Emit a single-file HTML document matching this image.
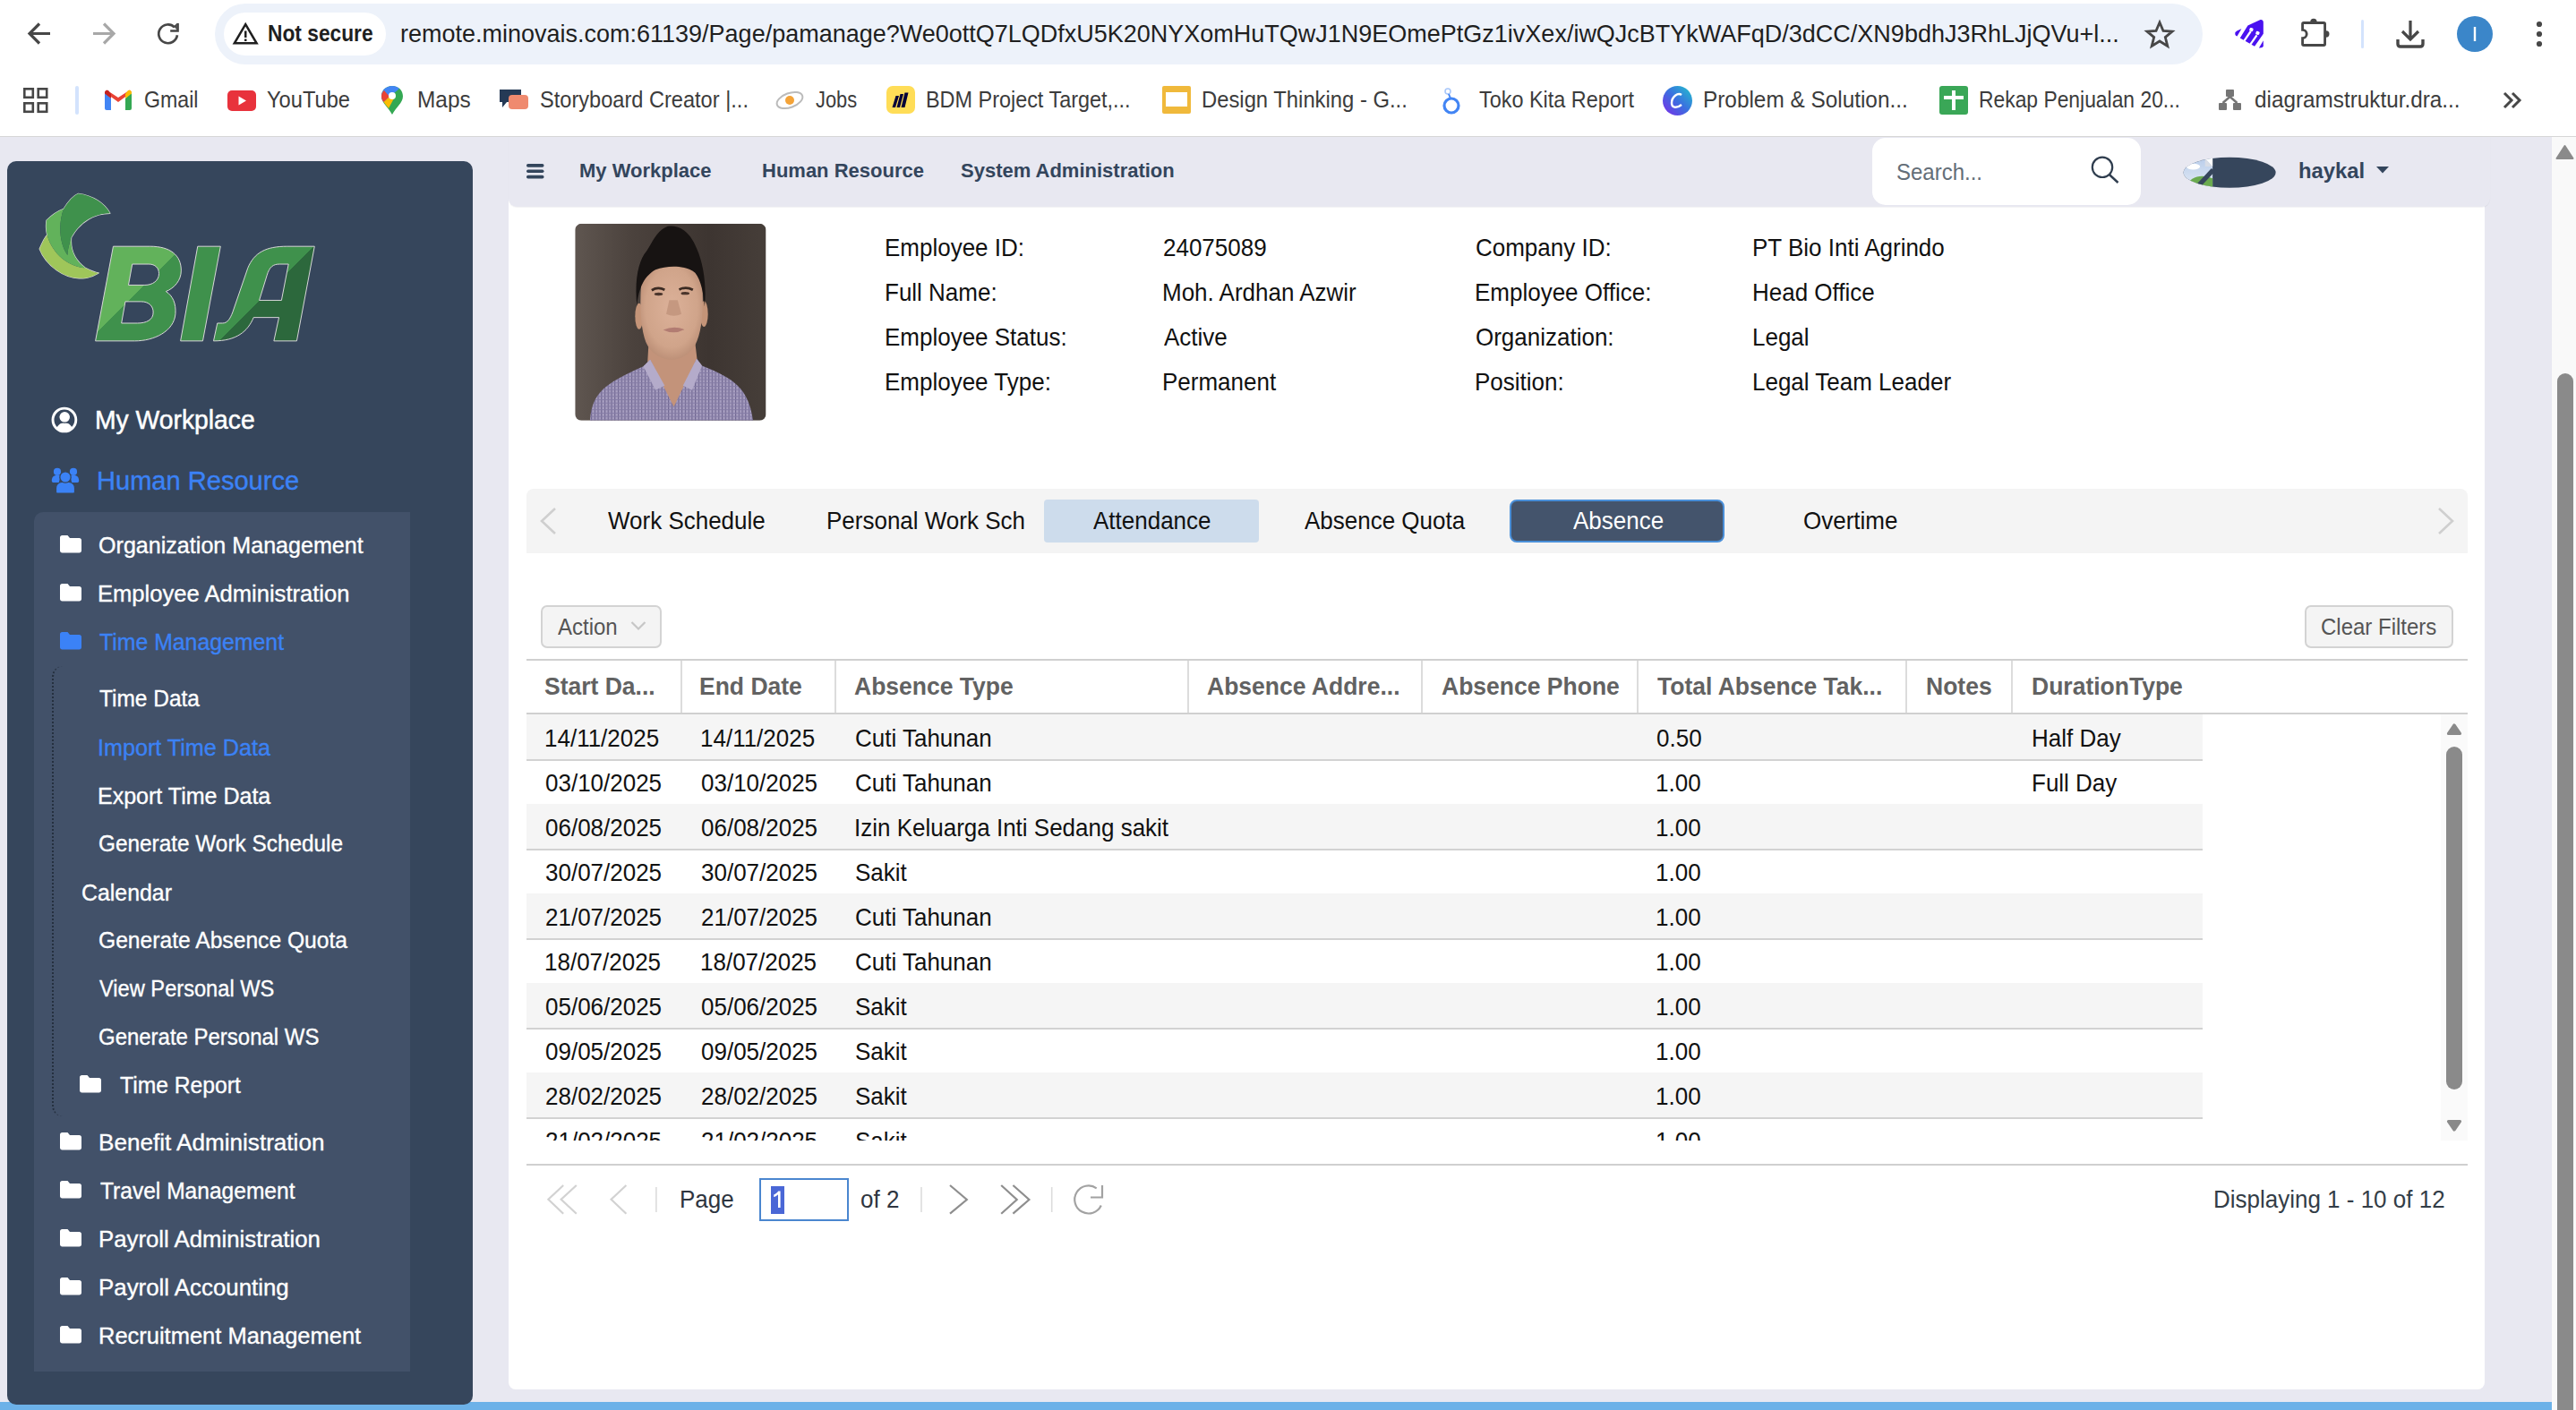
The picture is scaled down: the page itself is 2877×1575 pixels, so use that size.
<!DOCTYPE html><html><head><meta charset="utf-8"><style>
html,body{margin:0;padding:0;width:2877px;height:1575px;overflow:hidden;background:#e8e8f1;font-family:"Liberation Sans",sans-serif;}
.t{position:absolute;white-space:nowrap;line-height:1;}
.r{position:absolute;}
svg{position:absolute;overflow:visible;}
</style></head><body>
<div class="r" style="left:0px;top:0px;width:2877px;height:152px;background:#ffffff;"></div>
<div class="r" style="left:0px;top:152px;width:2877px;height:1px;background:#d6d6d6;"></div>
<div class="r" style="left:240px;top:4px;width:2220px;height:68px;background:#edf2fa;border-radius:34px;"></div>
<div class="r" style="left:250px;top:14px;width:181px;height:48px;background:#ffffff;border-radius:24px;"></div>
<svg style="left:0px;top:0px" width="240" height="80" viewBox="0 0 240 80">
<g fill="none" stroke-width="3.2" stroke-linecap="butt">
<path d="M56 37.5 H34 M44 26.5 L33 37.5 L44 48.5" stroke="#474747"/>
<path d="M104 37.5 H126 M116 26.5 L127 37.5 L116 48.5" stroke="#a8a8a8"/>
<path d="M197.95 39.25 A10.4 10.4 0 1 1 195 30.45" stroke="#474747" stroke-width="2.7"/>
<path d="M198.5 26 V34.5 H190.2" stroke="#474747" stroke-width="2.7" stroke-linejoin="miter"/>
</g>
<path d="M194.2 29.2 L197.3 26.2 L197.3 33.2 Z" fill="#474747"/>
</svg>
<svg style="left:258px;top:23px" width="32" height="30" viewBox="0 0 32 30">
<path d="M16.2 4.2 L28.6 25.3 H3.8 Z" fill="none" stroke="#1f1f1f" stroke-width="2.5" stroke-linejoin="miter"/>
<rect x="15" y="11.5" width="2.5" height="7.5" fill="#1f1f1f"/><rect x="15" y="20.5" width="2.5" height="2.5" fill="#1f1f1f"/>
</svg>
<div class="t" style="left:299.3px;top:25.4px;font-size:25.50px;font-weight:700;color:#1f1f1f;transform:scaleX(0.8923);transform-origin:0 0;">Not secure</div>
<div class="t" style="left:447.3px;top:24.1px;font-size:28.10px;font-weight:400;color:#1f1f1f;transform:scaleX(0.9609);transform-origin:0 0;">remote.minovais.com:61139/Page/pamanage?We0ottQ7LQDfxU5K20NYXomHuTQwJ1N9EOmePtGz1ivXex/iwQJcBTYkWAFqD/3dCC/XN9bdhJ3RhLJjQVu+l...</div>
<svg style="left:2395px;top:22px" width="34" height="32" viewBox="0 0 34 32">
<path d="M17 3 L21 12.5 L31 13.2 L23.3 19.6 L25.8 29.5 L17 24 L8.2 29.5 L10.7 19.6 L3 13.2 L13 12.5 Z" fill="none" stroke="#474747" stroke-width="2.8" stroke-linejoin="miter"/>
</svg>
<svg style="left:2480px;top:10px" width="140" height="56" viewBox="0 0 2576 1030">
<g fill="#4a12f0">
<path d="M820,220 C860,215 885,245 880,280 L880,510 L700,770 L400,600 L560,340 Z"/>
<path d="M300,500 C300,470 330,450 430,410 L340,560 C310,550 295,530 300,500 Z"/>
<path d="M880,650 L880,760 C870,790 840,805 790,800 Z"/>
</g>
<g stroke="#fff" stroke-width="42" fill="none"><path d="M480,665 L620,460"/><path d="M610,735 L745,540"/></g>
<g fill="#fff"><rect x="595" y="390" width="75" height="70" rx="22" transform="rotate(20 632 425)"/><rect x="725" y="460" width="75" height="70" rx="22" transform="rotate(20 762 495)"/></g>
<path d="M1710,285 H2120 Q2145,285 2145,310 V720 Q2145,745 2120,745 H1710 Q1685,745 1685,720 V600 A85,85 0 0 0 1685,430 V310 Q1685,285 1710,285 Z" stroke="#474747" stroke-width="52" fill="none"/>
<path d="M1845,265 A67,67 0 0 1 1980,265 Z" fill="#474747"/><path d="M2168,448 A67,67 0 0 1 2168,583 Z" fill="#474747"/>
</svg>
<div class="r" style="left:2636.5px;top:22px;width:3.5px;height:32px;background:#d3e3fd;border-radius:2px;"></div>
<svg style="left:2674px;top:20px" width="36" height="36" viewBox="0 0 36 36">
<path d="M18 3 V23 M9 15 L18 24 L27 15" fill="none" stroke="#474747" stroke-width="3.2"/>
<path d="M4 24 V29 Q4 32 7 32 H29 Q32 32 32 29 V24" fill="none" stroke="#474747" stroke-width="3.4"/>
</svg>
<svg style="left:2744px;top:18px" width="40" height="40" viewBox="0 0 40 40"><circle cx="20" cy="20" r="20" fill="#3b86c9"/><rect x="18.8" y="12" width="2.4" height="16" fill="#fff"/></svg>
<svg style="left:2830px;top:20px" width="14" height="36" viewBox="0 0 14 36"><circle cx="6" cy="7" r="3.1" fill="#474747"/><circle cx="6" cy="18" r="3.1" fill="#474747"/><circle cx="6" cy="29" r="3.1" fill="#474747"/></svg>
<svg style="left:26px;top:98px" width="30" height="30" viewBox="0 0 30 30" fill="none" stroke="#474747" stroke-width="2.6">
<rect x="1.3" y="1.3" width="9.5" height="9.5"/><rect x="16.7" y="1.3" width="9.5" height="9.5"/><rect x="1.3" y="17.3" width="9.5" height="9.5"/><rect x="16.7" y="17.3" width="9.5" height="9.5"/></svg>
<div class="r" style="left:84px;top:96px;width:4px;height:32px;background:#d3e3fd;border-radius:2px;"></div>
<svg style="left:117px;top:100px" width="30" height="23" viewBox="0 0 30 23">
<path d="M0 3 V21 A2 2 0 0 0 2 23 H7 V10 Z" fill="#4285f4"/>
<path d="M23 23 H28 A2 2 0 0 0 30 21 V3 L23 10 Z" fill="#34a853"/>
<path d="M0 3 L15 14 L30 3 L28 0.5 L15 9 L2 0.5 Z" fill="#ea4335"/>
<path d="M23 5 V10 L30 4.5 V3 A3 3 0 0 0 26 1 Z" fill="#fbbc04"/>
<path d="M0 3 V4.5 L7 10 V5 L4 1 A3 3 0 0 0 0 3 Z" fill="#c5221f"/>
</svg>
<div class="t" style="left:161.0px;top:99.2px;font-size:24.98px;font-weight:400;color:#3c3c3c;transform:scaleX(0.9270);transform-origin:0 0;">Gmail</div>
<svg style="left:254px;top:101px" width="32" height="23" viewBox="0 0 32 23"><rect width="32" height="23" rx="5" fill="#e8323c"/><path d="M12.5 6.5 L21 11.5 L12.5 16.5 Z" fill="#fff"/></svg>
<div class="t" style="left:298.3px;top:99.2px;font-size:24.98px;font-weight:400;color:#3c3c3c;transform:scaleX(0.9479);transform-origin:0 0;">YouTube</div>
<svg style="left:426px;top:96px" width="24" height="32" viewBox="0 0 24 32">
<path d="M12 0 C5 0 0 5 0 11.5 C0 19 8 24 12 32 C16 24 24 19 24 11.5 C24 5 19 0 12 0 Z" fill="#34a853"/>
<path d="M12 0 C5 0 0 5 0 11.5 C0 14 1 16 2.5 18 L20 3 C18 1 15 0 12 0 Z" fill="#4285f4"/>
<path d="M0 11.5 C0 14 1 16 2.5 18 L9 12 L3 5 C1 7 0 9 0 11.5 Z" fill="#ea4335"/>
<path d="M2.5 18 C4 20 6 22 8 25 L14 14 L9 12 Z" fill="#fbbc04"/>
<circle cx="12" cy="11" r="4" fill="#fff"/></svg>
<div class="t" style="left:466.2px;top:99.2px;font-size:24.98px;font-weight:400;color:#3c3c3c;transform:scaleX(0.9776);transform-origin:0 0;">Maps</div>
<svg style="left:558px;top:100px" width="32" height="26" viewBox="0 0 32 26"><path d="M0 0 H24 V14 H8 L3 20 V14 H0 Z" fill="#253a56"/><rect x="10" y="6" width="22" height="16" rx="4" fill="#ef8a6f"/></svg>
<div class="t" style="left:602.8px;top:99.2px;font-size:24.98px;font-weight:400;color:#3c3c3c;transform:scaleX(0.9447);transform-origin:0 0;">Storyboard Creator |...</div>
<svg style="left:866px;top:99px" width="32" height="26" viewBox="0 0 32 26"><ellipse cx="16" cy="13" rx="15" ry="8" transform="rotate(-20 16 13)" fill="none" stroke="#bbb" stroke-width="2"/><circle cx="16" cy="13" r="5" fill="#f4a338"/></svg>
<div class="t" style="left:911.2px;top:99.2px;font-size:24.98px;font-weight:400;color:#3c3c3c;transform:scaleX(0.8750);transform-origin:0 0;">Jobs</div>
<svg style="left:990px;top:96px" width="32" height="31" viewBox="0 0 32 31"><rect width="32" height="31" rx="7" fill="#ffdd57"/><path d="M6.5 24 L10.5 11 H14 L10 24 Z M11.5 24 L15.5 9 H19 L15 24 Z M16.5 24 L20.5 7.5 H24.5 L20.5 24 Z" fill="#050038"/></svg>
<div class="t" style="left:1034.3px;top:99.2px;font-size:24.98px;font-weight:400;color:#3c3c3c;transform:scaleX(0.9375);transform-origin:0 0;">BDM Project Target,...</div>
<svg style="left:1298px;top:96px" width="32" height="31" viewBox="0 0 32 31"><rect width="32" height="31" rx="2" fill="#f0b93b"/><rect x="4" y="7" width="24" height="16" fill="#fff"/></svg>
<div class="t" style="left:1342.0px;top:99.2px;font-size:24.98px;font-weight:400;color:#3c3c3c;transform:scaleX(0.9536);transform-origin:0 0;">Design Thinking - G...</div>
<svg style="left:1608px;top:97px" width="26" height="32" viewBox="0 0 26 32"><circle cx="13" cy="21" r="8" fill="none" stroke="#4285f4" stroke-width="3.2"/><circle cx="9" cy="5" r="3" fill="none" stroke="#a8c7fa" stroke-width="1.6"/><path d="M10 8 L12 13" stroke="#4285f4" stroke-width="2"/></svg>
<div class="t" style="left:1651.8px;top:99.2px;font-size:24.98px;font-weight:400;color:#3c3c3c;transform:scaleX(0.9373);transform-origin:0 0;">Toko Kita Report</div>
<svg style="left:1857px;top:96px" width="33" height="33" viewBox="0 0 33 33"><defs><linearGradient id="cv" x1="0" y1="1" x2="1" y2="0"><stop offset="0" stop-color="#7d2ae8"/><stop offset="0.5" stop-color="#3b6fe0"/><stop offset="1" stop-color="#20c4cb"/></linearGradient></defs><circle cx="16.5" cy="16.5" r="16.5" fill="url(#cv)"/><path d="M21 10 C17 7 10 12 10 19 C10 25 16 25 21 21" fill="none" stroke="#fff" stroke-width="2.4"/></svg>
<div class="t" style="left:1901.9px;top:99.2px;font-size:24.98px;font-weight:400;color:#3c3c3c;transform:scaleX(0.9753);transform-origin:0 0;">Problem &amp; Solution...</div>
<svg style="left:2166px;top:96px" width="32" height="32" viewBox="0 0 32 32"><rect width="32" height="32" rx="3" fill="#3aa757"/><rect x="14" y="5" width="4" height="22" fill="#fff"/><rect x="5" y="11" width="22" height="4" fill="#fff"/></svg>
<div class="t" style="left:2209.9px;top:99.2px;font-size:24.98px;font-weight:400;color:#3c3c3c;transform:scaleX(0.9153);transform-origin:0 0;">Rekap Penjualan 20...</div>
<svg style="left:2478px;top:100px" width="25" height="24" viewBox="0 0 25 24"><rect x="8" y="0" width="9" height="8" rx="1" fill="#757575"/><rect x="0" y="15" width="9" height="8" rx="1" fill="#757575"/><rect x="16" y="15" width="9" height="8" rx="1" fill="#757575"/><path d="M12.5 8 L4.5 15 M12.5 8 L20.5 15" stroke="#757575" stroke-width="2.4"/></svg>
<div class="t" style="left:2518.0px;top:99.2px;font-size:24.98px;font-weight:400;color:#3c3c3c;transform:scaleX(0.9730);transform-origin:0 0;">diagramstruktur.dra...</div>
<svg style="left:2794px;top:101px" width="24" height="22" viewBox="0 0 24 22"><path d="M3 3 L11 11 L3 19 M12 3 L20 11 L12 19" fill="none" stroke="#474747" stroke-width="3"/></svg>
<div class="r" style="left:2850px;top:153px;width:27px;height:1422px;background:#f9f9f9;"></div>
<svg style="left:2850px;top:153px" width="27" height="30" viewBox="0 0 27 30"><path d="M5.5 24 L14.5 10 L23.5 24 Z" fill="#8a8a8a" stroke="#8a8a8a" stroke-width="2" stroke-linejoin="round"/></svg>
<div class="r" style="left:2856px;top:417px;width:18px;height:1158px;background:#8a8a8a;border-radius:9px 9px 0 0;"></div>
<div class="r" style="left:0px;top:1566px;width:2850px;height:9px;background:#6cb1e8;"></div>
<div class="r" style="left:8px;top:180px;width:520px;height:1389px;background:#36465c;border-radius:10px;"></div>
<div class="r" style="left:38px;top:572px;width:420px;height:960px;background:#425169;border-radius:10px 0 0 0;"></div>
<svg style="left:30px;top:200px" width="340" height="200" viewBox="0 0 2397 1410">
<defs>
<linearGradient id="gB" gradientUnits="userSpaceOnUse" x1="0" y1="0" x2="2397" y2="2397"><stop offset="0.367" stop-color="#62b25b"/><stop offset="0.367" stop-color="#3f914c"/></linearGradient>
<linearGradient id="gA" gradientUnits="userSpaceOnUse" x1="0" y1="0" x2="2397" y2="2397"><stop offset="0.582" stop-color="#3f914c"/><stop offset="0.582" stop-color="#2c683c"/></linearGradient>
</defs>
<path fill="none" stroke="#d8d8d8" stroke-width="9" stroke-linejoin="round" d="M100,550 C130,480 150,450 160,440 C150,400 150,360 155,325 C200,280 250,250 290,235 C330,170 370,130 405,115 C520,130 610,190 655,270 C540,270 420,330 350,460 C340,560 380,640 460,700 C500,720 530,735 565,740 C500,780 440,785 430,780 C300,790 150,680 100,550 Z"/>
<g stroke="none">
<path d="M100,550 C130,480 150,450 160,440 C200,590 330,690 460,700 C500,720 530,735 565,740 C500,780 440,785 430,780 C300,790 150,680 100,550 Z" fill="#9fc65a"/>
<path d="M155,325 C200,280 250,250 290,235 C250,340 250,500 320,600 C320,570 330,520 350,460 C340,560 380,640 460,700 C330,690 200,590 160,440 C150,400 150,360 155,325 Z" fill="#62b25b"/>
<path d="M290,235 C330,170 370,130 405,115 C520,130 610,190 655,270 C540,270 420,330 350,460 C330,520 320,570 320,600 C250,500 250,340 290,235 Z" fill="#3f914c"/>
<path stroke="#d8d8d8" stroke-width="7" fill-rule="evenodd" fill="url(#gB)" d="M680,530 L970,530 C1130,530 1215,600 1215,720 C1215,800 1160,860 1095,885 C1150,920 1175,980 1170,1060 C1160,1200 1000,1275 850,1275 L540,1275 Z M830,670 L960,670 C1010,670 1040,700 1040,745 C1040,800 990,835 930,835 L800,835 Z M775,965 L900,965 C960,965 995,1000 995,1050 C995,1110 940,1135 870,1135 L745,1135 Z"/>
<path stroke="#d8d8d8" stroke-width="7" d="M1345,530 L1525,530 L1385,1275 L1210,1275 Z" fill="#3f914c"/>
<path stroke="#d8d8d8" stroke-width="7" fill-rule="evenodd" fill="url(#gA)" d="M1470,1275 L1500,1135 L1540,1135 C1580,1135 1600,1100 1620,1050 L1740,700 C1790,580 1880,530 2050,530 L2265,530 L2125,1275 L1945,1275 L1985,1090 L1785,1090 C1740,1200 1650,1275 1470,1275 Z M1830,955 L2005,955 L2060,670 L1990,670 C1940,670 1910,690 1890,760 Z"/>
</g></svg>
<svg style="left:57px;top:455px" width="30" height="30" viewBox="0 0 30 30">
<circle cx="14.9" cy="14" r="12.9" fill="none" stroke="#fff" stroke-width="2.9"/>
<path d="M6.2 23.6 C7.8 19.3 11 17.3 15 17.3 C19 17.3 22.2 19.3 23.8 23.6 C21.3 26 18.3 27.3 15 27.3 C11.7 27.3 8.7 26 6.2 23.6 Z" fill="#fff"/>
<circle cx="15.2" cy="10.8" r="6.4" fill="#fff" stroke="#36465c" stroke-width="1.2"/>
</svg>
<div class="t" style="left:106.3px;top:453.7px;font-size:29.66px;font-weight:400;color:#ffffff;-webkit-text-stroke:0.5px #fff;transform:scaleX(0.9538);transform-origin:0 0;">My Workplace</div>
<svg style="left:57px;top:522px" width="32" height="30" viewBox="0 0 32 30" fill="#3b82f6">
<circle cx="7" cy="4.9" r="4.1"/><circle cx="25" cy="4.9" r="4.1"/>
<path d="M0.8 15 C0.8 11 3 9 6 9 H9 C10.5 9 11.5 10 12 11 C10 12.5 9 14.5 9 17 H2.5 C1.5 17 0.8 16 0.8 15 Z"/>
<path d="M31.2 15 C31.2 11 29 9 26 9 H23 C21.5 9 20.5 10 20 11 C22 12.5 23 14.5 23 17 H29.5 C30.5 17 31.2 16 31.2 15 Z"/>
<path d="M5.5 27.5 V23 C5.5 19 8.5 16.5 12 16.5 H20 C23.5 16.5 26.5 19 26.5 23 V27.5 C26.5 28.5 26 29 25 29 H7 C6 29 5.5 28.5 5.5 27.5 Z" stroke="#36465c" stroke-width="1.2"/>
<circle cx="16" cy="11" r="6.2" stroke="#36465c" stroke-width="1.3"/>
</svg>
<div class="t" style="left:107.7px;top:522.2px;font-size:29.66px;font-weight:400;color:#3b82f6;-webkit-text-stroke:0.4px #3b82f6;transform:scaleX(0.9798);transform-origin:0 0;">Human Resource</div>
<svg style="left:67px;top:598.3px" width="24" height="19.4" viewBox="0 0 24 20" preserveAspectRatio="none"><path d="M0 2.5 C0 1 1 0 2.5 0 H8.5 L11 3 H21.5 C23 3 24 4 24 5.5 V17.5 C24 19 23 20 21.5 20 H2.5 C1 20 0 19 0 17.5 Z" fill="#fff"/></svg>
<div class="t" style="left:110.2px;top:597.2px;font-size:24.98px;font-weight:400;color:#fff;-webkit-text-stroke:0.35px #fff;transform:scaleX(1.0051);transform-origin:0 0;">Organization Management</div>
<svg style="left:67px;top:652.3px" width="24" height="19.4" viewBox="0 0 24 20" preserveAspectRatio="none"><path d="M0 2.5 C0 1 1 0 2.5 0 H8.5 L11 3 H21.5 C23 3 24 4 24 5.5 V17.5 C24 19 23 20 21.5 20 H2.5 C1 20 0 19 0 17.5 Z" fill="#fff"/></svg>
<div class="t" style="left:109.2px;top:651.2px;font-size:24.98px;font-weight:400;color:#fff;-webkit-text-stroke:0.35px #fff;transform:scaleX(1.0243);transform-origin:0 0;">Employee Administration</div>
<svg style="left:67px;top:705.7px" width="24" height="19.4" viewBox="0 0 24 20" preserveAspectRatio="none"><path d="M0 2.5 C0 1 1 0 2.5 0 H8.5 L11 3 H21.5 C23 3 24 4 24 5.5 V17.5 C24 19 23 20 21.5 20 H2.5 C1 20 0 19 0 17.5 Z" fill="#3b82f6"/></svg>
<div class="t" style="left:111.2px;top:704.6px;font-size:24.98px;font-weight:400;color:#3b82f6;-webkit-text-stroke:0.35px #3b82f6;transform:scaleX(0.9942);transform-origin:0 0;">Time Management</div>
<div class="t" style="left:111.2px;top:768.2px;font-size:24.98px;font-weight:400;color:#fff;-webkit-text-stroke:0.35px #fff;transform:scaleX(0.9798);transform-origin:0 0;">Time Data</div>
<div class="t" style="left:109.2px;top:822.7px;font-size:24.98px;font-weight:400;color:#3b82f6;-webkit-text-stroke:0.35px #3b82f6;transform:scaleX(1.0074);transform-origin:0 0;">Import Time Data</div>
<div class="t" style="left:109.2px;top:876.9px;font-size:24.98px;font-weight:400;color:#fff;-webkit-text-stroke:0.35px #fff;transform:scaleX(1.0021);transform-origin:0 0;">Export Time Data</div>
<div class="t" style="left:110.2px;top:930.2px;font-size:24.98px;font-weight:400;color:#fff;-webkit-text-stroke:0.35px #fff;transform:scaleX(0.9755);transform-origin:0 0;">Generate Work Schedule</div>
<div class="t" style="left:90.5px;top:984.8px;font-size:24.98px;font-weight:400;color:#fff;-webkit-text-stroke:0.35px #fff;transform:scaleX(0.9960);transform-origin:0 0;">Calendar</div>
<div class="t" style="left:110.2px;top:1038.0px;font-size:24.98px;font-weight:400;color:#fff;-webkit-text-stroke:0.35px #fff;transform:scaleX(0.9868);transform-origin:0 0;">Generate Absence Quota</div>
<div class="t" style="left:111.2px;top:1092.2px;font-size:24.98px;font-weight:400;color:#fff;-webkit-text-stroke:0.35px #fff;transform:scaleX(0.9466);transform-origin:0 0;">View Personal WS</div>
<div class="t" style="left:110.2px;top:1146.2px;font-size:24.98px;font-weight:400;color:#fff;-webkit-text-stroke:0.35px #fff;transform:scaleX(0.9596);transform-origin:0 0;">Generate Personal WS</div>
<svg style="left:89px;top:1201.3px" width="24" height="19.4" viewBox="0 0 24 20" preserveAspectRatio="none"><path d="M0 2.5 C0 1 1 0 2.5 0 H8.5 L11 3 H21.5 C23 3 24 4 24 5.5 V17.5 C24 19 23 20 21.5 20 H2.5 C1 20 0 19 0 17.5 Z" fill="#fff"/></svg>
<div class="t" style="left:133.7px;top:1200.2px;font-size:24.98px;font-weight:400;color:#fff;-webkit-text-stroke:0.35px #fff;transform:scaleX(0.9883);transform-origin:0 0;">Time Report</div>
<svg style="left:67px;top:1265.3px" width="24" height="19.4" viewBox="0 0 24 20" preserveAspectRatio="none"><path d="M0 2.5 C0 1 1 0 2.5 0 H8.5 L11 3 H21.5 C23 3 24 4 24 5.5 V17.5 C24 19 23 20 21.5 20 H2.5 C1 20 0 19 0 17.5 Z" fill="#fff"/></svg>
<div class="t" style="left:110.1px;top:1264.2px;font-size:24.98px;font-weight:400;color:#fff;-webkit-text-stroke:0.35px #fff;transform:scaleX(1.0454);transform-origin:0 0;">Benefit Administration</div>
<svg style="left:67px;top:1319.3px" width="24" height="19.4" viewBox="0 0 24 20" preserveAspectRatio="none"><path d="M0 2.5 C0 1 1 0 2.5 0 H8.5 L11 3 H21.5 C23 3 24 4 24 5.5 V17.5 C24 19 23 20 21.5 20 H2.5 C1 20 0 19 0 17.5 Z" fill="#fff"/></svg>
<div class="t" style="left:112.2px;top:1318.2px;font-size:24.98px;font-weight:400;color:#fff;-webkit-text-stroke:0.35px #fff;transform:scaleX(0.9837);transform-origin:0 0;">Travel Management</div>
<svg style="left:67px;top:1372.8px" width="24" height="19.4" viewBox="0 0 24 20" preserveAspectRatio="none"><path d="M0 2.5 C0 1 1 0 2.5 0 H8.5 L11 3 H21.5 C23 3 24 4 24 5.5 V17.5 C24 19 23 20 21.5 20 H2.5 C1 20 0 19 0 17.5 Z" fill="#fff"/></svg>
<div class="t" style="left:110.1px;top:1371.7px;font-size:24.98px;font-weight:400;color:#fff;-webkit-text-stroke:0.35px #fff;transform:scaleX(1.0325);transform-origin:0 0;">Payroll Administration</div>
<svg style="left:67px;top:1426.8px" width="24" height="19.4" viewBox="0 0 24 20" preserveAspectRatio="none"><path d="M0 2.5 C0 1 1 0 2.5 0 H8.5 L11 3 H21.5 C23 3 24 4 24 5.5 V17.5 C24 19 23 20 21.5 20 H2.5 C1 20 0 19 0 17.5 Z" fill="#fff"/></svg>
<div class="t" style="left:110.1px;top:1425.7px;font-size:24.98px;font-weight:400;color:#fff;-webkit-text-stroke:0.35px #fff;transform:scaleX(1.0356);transform-origin:0 0;">Payroll Accounting</div>
<svg style="left:67px;top:1480.8px" width="24" height="19.4" viewBox="0 0 24 20" preserveAspectRatio="none"><path d="M0 2.5 C0 1 1 0 2.5 0 H8.5 L11 3 H21.5 C23 3 24 4 24 5.5 V17.5 C24 19 23 20 21.5 20 H2.5 C1 20 0 19 0 17.5 Z" fill="#fff"/></svg>
<div class="t" style="left:110.2px;top:1479.7px;font-size:24.98px;font-weight:400;color:#fff;-webkit-text-stroke:0.35px #fff;transform:scaleX(1.0204);transform-origin:0 0;">Recruitment Management</div>
<div class="r" style="left:58px;top:744px;width:14px;height:503px;border-left:2px dotted #25303f;border-top:0;border-radius:12px 0 0 12px;"></div>
<div class="r" style="left:568px;top:215px;width:2207px;height:1337px;background:#ffffff;border-radius:0 0 8px 8px;"></div>
<div class="r" style="left:568px;top:153px;width:2213px;height:77.5px;background:#e8e8f1;border-radius:0 0 9px 9px;box-shadow:0 1px 1px rgba(0,0,40,0.05);"></div>
<svg style="left:587.7px;top:182px" width="20" height="18" viewBox="0 0 20 18" fill="#33455c"><rect y="1" width="19.5" height="3.7" rx="1.8"/><rect y="7.4" width="19.5" height="3.7" rx="1.8"/><rect y="13.7" width="19.5" height="3.9" rx="1.8"/></svg>
<div class="t" style="left:647.2px;top:178.5px;font-size:22.90px;font-weight:700;color:#33455c;transform:scaleX(0.9609);transform-origin:0 0;">My Workplace</div>
<div class="t" style="left:851.2px;top:178.5px;font-size:22.90px;font-weight:700;color:#33455c;transform:scaleX(0.9609);transform-origin:0 0;">Human Resource</div>
<div class="t" style="left:1072.8px;top:178.5px;font-size:22.90px;font-weight:700;color:#33455c;transform:scaleX(0.9609);transform-origin:0 0;">System Administration</div>
<div class="r" style="left:2091px;top:154px;width:300px;height:75px;background:#ffffff;border-radius:15px;"></div>
<div class="t" style="left:2118.2px;top:179.5px;font-size:24.98px;font-weight:400;color:#646e78;transform:scaleX(0.9609);transform-origin:0 0;">Search...</div>
<svg style="left:2334px;top:174px" width="34" height="32" viewBox="0 0 34 32"><circle cx="14" cy="12.8" r="11.2" fill="none" stroke="#2f3d4e" stroke-width="2.2"/><path d="M21.8 21 L31.5 30" stroke="#2f3d4e" stroke-width="2.4"/></svg>
<svg style="left:2080px;top:150px" width="620" height="85" viewBox="0 0 2576 353">
<defs><clipPath id="avc"><ellipse cx="1704" cy="177.5" rx="214" ry="70.5"/></clipPath>
<linearGradient id="avg" x1="0" y1="0" x2="0" y2="1"><stop offset="0" stop-color="#b9cdea"/><stop offset="1" stop-color="#e6edf7"/></linearGradient></defs>
<g clip-path="url(#avc)">
<rect x="1480" y="100" width="460" height="160" fill="#36465c"/>
<rect x="1485" y="110" width="140" height="150" fill="url(#avg)"/>
<ellipse cx="1535" cy="150" rx="32" ry="14" fill="#fff"/>
<path d="M1500,240 C1520,200 1570,180 1625,205 L1625,260 L1500,260 Z" fill="#6aaa4f"/>
<path d="M1590,112 L1625,112 L1625,150 Z" fill="#fff"/><path d="M1590,112 L1590,150 L1625,150 Z" fill="#d8dde6"/>
<path d="M1628,165 L1562,236" stroke="#36465c" stroke-width="22"/>
</g></svg>
<div class="t" style="left:2567.1px;top:179.0px;font-size:23.94px;font-weight:700;color:#33455c;transform:scaleX(0.9958);transform-origin:0 0;">haykal</div>
<svg style="left:2654px;top:186px" width="14" height="8" viewBox="0 0 14 8"><path d="M0 0 H14 L7 7.5 Z" fill="#33455c"/></svg>
<svg style="left:630px;top:240px" width="240" height="240" viewBox="0 0 1410 1410">
<defs><clipPath id="pc"><rect x="72" y="58" width="1253" height="1292" rx="42"/></clipPath>
<linearGradient id="bgp" x1="0" y1="0" x2="1" y2="0"><stop offset="0" stop-color="#5f5650"/><stop offset="0.3" stop-color="#4b423d"/><stop offset="0.7" stop-color="#3d3531"/><stop offset="1" stop-color="#463e39"/></linearGradient>
<radialGradient id="skin" cx="0.5" cy="0.45" r="0.6"><stop offset="0" stop-color="#dcb199"/><stop offset="0.7" stop-color="#d0a48a"/><stop offset="1" stop-color="#b78a72"/></radialGradient>
<pattern id="chk" width="22" height="22" patternUnits="userSpaceOnUse"><rect width="22" height="22" fill="#a79ec0"/><rect x="0" width="7" height="22" fill="#6f6690"/><rect y="0" width="22" height="6" fill="#857ca6"/></pattern></defs>
<g clip-path="url(#pc)">
<rect x="72" y="58" width="1253" height="1292" fill="url(#bgp)"/>
<path d="M555,840 C600,930 810,930 860,840 L880,1010 L720,1260 L545,1010 Z" fill="#c3937a"/>
<ellipse cx="492" cy="665" rx="26" ry="85" fill="#c49478"/><ellipse cx="918" cy="650" rx="26" ry="85" fill="#c49478"/>
<path d="M505,470 C505,380 560,335 705,330 C860,335 905,390 908,480 C915,630 905,770 860,855 C815,925 760,950 705,950 C645,950 585,920 548,858 C505,780 495,620 505,470 Z" fill="url(#skin)"/>
<path d="M478,600 C460,420 490,300 540,240 C580,180 610,100 680,75 C760,60 830,120 870,220 C915,320 935,460 922,600 C915,520 900,430 860,380 C800,330 680,330 600,360 C530,400 490,470 478,600 Z" fill="#171312"/>
<path d="M575,495 Q615,470 660,492" stroke="#3a2a22" stroke-width="16" fill="none"/><path d="M755,490 Q800,468 845,492" stroke="#3a2a22" stroke-width="16" fill="none"/>
<ellipse cx="620" cy="520" rx="28" ry="10" fill="#4a352c"/><ellipse cx="795" cy="515" rx="28" ry="10" fill="#4a352c"/>
<path d="M690,560 L670,650 Q720,675 770,650 L745,560 Z" fill="#c59880"/>
<path d="M650,755 Q720,725 790,752 Q720,790 650,755 Z" fill="#b27c72"/>
<path d="M170,1350 C185,1170 260,1110 520,995 L565,950 L720,1260 L870,945 L905,990 C1120,1075 1210,1140 1240,1350 Z" fill="url(#chk)"/>
<path d="M520,995 L565,950 L660,1120 L600,1150 Z" fill="#b4abca"/><path d="M905,990 L870,945 L780,1120 L840,1150 Z" fill="#b4abca"/>
</g></svg>
<div class="t" style="left:987.7px;top:264.2px;font-size:27.06px;font-weight:400;color:#111111;transform:scaleX(0.9609);transform-origin:0 0;">Employee ID:</div>
<div class="t" style="left:1298.8px;top:264.2px;font-size:27.06px;font-weight:400;color:#111111;transform:scaleX(0.9609);transform-origin:0 0;">24075089</div>
<div class="t" style="left:1648.2px;top:264.2px;font-size:27.06px;font-weight:400;color:#111111;transform:scaleX(0.9609);transform-origin:0 0;">Company ID:</div>
<div class="t" style="left:1957.3px;top:264.2px;font-size:27.06px;font-weight:400;color:#111111;transform:scaleX(0.9609);transform-origin:0 0;">PT Bio Inti Agrindo</div>
<div class="t" style="left:987.7px;top:314.2px;font-size:27.06px;font-weight:400;color:#111111;transform:scaleX(0.9609);transform-origin:0 0;">Full Name:</div>
<div class="t" style="left:1297.9px;top:314.2px;font-size:27.06px;font-weight:400;color:#111111;transform:scaleX(0.9609);transform-origin:0 0;">Moh. Ardhan Azwir</div>
<div class="t" style="left:1647.3px;top:314.2px;font-size:27.06px;font-weight:400;color:#111111;transform:scaleX(0.9609);transform-origin:0 0;">Employee Office:</div>
<div class="t" style="left:1957.3px;top:314.2px;font-size:27.06px;font-weight:400;color:#111111;transform:scaleX(0.9609);transform-origin:0 0;">Head Office</div>
<div class="t" style="left:987.7px;top:364.2px;font-size:27.06px;font-weight:400;color:#111111;transform:scaleX(0.9609);transform-origin:0 0;">Employee Status:</div>
<div class="t" style="left:1299.8px;top:364.2px;font-size:27.06px;font-weight:400;color:#111111;transform:scaleX(0.9609);transform-origin:0 0;">Active</div>
<div class="t" style="left:1648.2px;top:364.2px;font-size:27.06px;font-weight:400;color:#111111;transform:scaleX(0.9609);transform-origin:0 0;">Organization:</div>
<div class="t" style="left:1957.3px;top:364.2px;font-size:27.06px;font-weight:400;color:#111111;transform:scaleX(0.9609);transform-origin:0 0;">Legal</div>
<div class="t" style="left:987.7px;top:414.2px;font-size:27.06px;font-weight:400;color:#111111;transform:scaleX(0.9609);transform-origin:0 0;">Employee Type:</div>
<div class="t" style="left:1297.9px;top:414.2px;font-size:27.06px;font-weight:400;color:#111111;transform:scaleX(0.9609);transform-origin:0 0;">Permanent</div>
<div class="t" style="left:1647.3px;top:414.2px;font-size:27.06px;font-weight:400;color:#111111;transform:scaleX(0.9609);transform-origin:0 0;">Position:</div>
<div class="t" style="left:1957.3px;top:414.2px;font-size:27.06px;font-weight:400;color:#111111;transform:scaleX(0.9609);transform-origin:0 0;">Legal Team Leader</div>
<div class="r" style="left:588px;top:546px;width:2168px;height:72px;background:#f4f4f4;border-radius:8px 8px 0 0;"></div>
<svg style="left:600px;top:566px" width="24" height="32" viewBox="0 0 24 32"><path d="M20 2 L5 16 L20 30" fill="none" stroke="#cfcfcf" stroke-width="2.6"/></svg>
<svg style="left:2720px;top:566px" width="24" height="32" viewBox="0 0 24 32"><path d="M4 2 L19 16 L4 30" fill="none" stroke="#cfcfcf" stroke-width="2.6"/></svg>
<div class="r" style="left:1166px;top:558px;width:240px;height:48px;background:#cddcec;border-radius:4px;"></div>
<div class="r" style="left:1686px;top:558px;width:240px;height:48px;background:#44546c;border-radius:8px;border:2px solid #4a8fd8;box-sizing:border-box;"></div>
<div class="t" style="left:679.2px;top:569.2px;font-size:27.06px;font-weight:400;color:#111;transform:scaleX(0.9609);transform-origin:0 0;">Work Schedule</div>
<div class="t" style="left:923.3px;top:569.2px;font-size:27.06px;font-weight:400;color:#111;transform:scaleX(0.9609);transform-origin:0 0;">Personal Work Sch</div>
<div class="t" style="left:1221.2px;top:569.2px;font-size:27.06px;font-weight:400;color:#111;transform:scaleX(0.9609);transform-origin:0 0;">Attendance</div>
<div class="t" style="left:1457.2px;top:569.2px;font-size:27.06px;font-weight:400;color:#111;transform:scaleX(0.9609);transform-origin:0 0;">Absence Quota</div>
<div class="t" style="left:1757.2px;top:569.2px;font-size:27.06px;font-weight:400;color:#ffffff;transform:scaleX(0.9609);transform-origin:0 0;">Absence</div>
<div class="t" style="left:2014.2px;top:569.2px;font-size:27.06px;font-weight:400;color:#111;transform:scaleX(0.9609);transform-origin:0 0;">Overtime</div>
<div class="r" style="left:604px;top:676px;width:135px;height:48px;background:#f4f4f4;border:2px solid #d3d3d3;border-radius:7px;box-sizing:border-box;"></div>
<div class="t" style="left:623.2px;top:688.0px;font-size:24.98px;font-weight:400;color:#555;transform:scaleX(0.9609);transform-origin:0 0;">Action</div>
<svg style="left:703px;top:693px" width="20" height="13" viewBox="0 0 20 13"><path d="M2.5 2 L10 9.5 L17.5 2" fill="none" stroke="#c6c6c6" stroke-width="2.2"/></svg>
<div class="r" style="left:2574px;top:676px;width:166px;height:48px;background:#f4f4f4;border:2px solid #d3d3d3;border-radius:7px;box-sizing:border-box;"></div>
<div class="t" style="left:2591.8px;top:688.0px;font-size:24.98px;font-weight:400;color:#555;transform:scaleX(0.9609);transform-origin:0 0;">Clear Filters</div>
<div class="r" style="left:588px;top:736px;width:2168px;height:2px;background:#d0d0d0;"></div>
<div class="r" style="left:588px;top:796px;width:2168px;height:2px;background:#d0d0d0;"></div>
<div class="r" style="left:760px;top:738px;width:2px;height:58px;background:#dcdcdc;"></div>
<div class="r" style="left:932px;top:738px;width:2px;height:58px;background:#dcdcdc;"></div>
<div class="r" style="left:1326px;top:738px;width:2px;height:58px;background:#dcdcdc;"></div>
<div class="r" style="left:1587px;top:738px;width:2px;height:58px;background:#dcdcdc;"></div>
<div class="r" style="left:1828px;top:738px;width:2px;height:58px;background:#dcdcdc;"></div>
<div class="r" style="left:2128px;top:738px;width:2px;height:58px;background:#dcdcdc;"></div>
<div class="r" style="left:2246px;top:738px;width:2px;height:58px;background:#dcdcdc;"></div>
<div class="t" style="left:608.2px;top:753.1px;font-size:27.58px;font-weight:700;color:#626262;transform:scaleX(0.9609);transform-origin:0 0;">Start Da...</div>
<div class="t" style="left:781.3px;top:753.1px;font-size:27.58px;font-weight:700;color:#626262;transform:scaleX(0.9609);transform-origin:0 0;">End Date</div>
<div class="t" style="left:954.2px;top:753.1px;font-size:27.58px;font-weight:700;color:#626262;transform:scaleX(0.9609);transform-origin:0 0;">Absence Type</div>
<div class="t" style="left:1348.2px;top:753.1px;font-size:27.58px;font-weight:700;color:#626262;transform:scaleX(0.9609);transform-origin:0 0;">Absence Addre...</div>
<div class="t" style="left:1610.2px;top:753.1px;font-size:27.58px;font-weight:700;color:#626262;transform:scaleX(0.9609);transform-origin:0 0;">Absence Phone</div>
<div class="t" style="left:1851.2px;top:753.1px;font-size:27.58px;font-weight:700;color:#626262;transform:scaleX(0.9609);transform-origin:0 0;">Total Absence Tak...</div>
<div class="t" style="left:2151.3px;top:753.1px;font-size:27.58px;font-weight:700;color:#626262;transform:scaleX(0.9609);transform-origin:0 0;">Notes</div>
<div class="t" style="left:2269.3px;top:753.1px;font-size:27.58px;font-weight:700;color:#626262;transform:scaleX(0.9609);transform-origin:0 0;">DurationType</div>
<div class="r" style="left:588px;top:798px;width:2168px;height:476px;overflow:hidden;">
<div class="r" style="left:0px;top:0px;width:1872px;height:50px;background:#f5f5f5;"></div>
<div class="r" style="left:0px;top:50px;width:1872px;height:2px;background:#d2d2d2;"></div>
<div class="t" style="left:19.8px;top:13.7px;font-size:27.06px;font-weight:400;color:#111;transform:scaleX(0.9609);transform-origin:0 0;">14/11/2025</div>
<div class="t" style="left:193.9px;top:13.7px;font-size:27.06px;font-weight:400;color:#111;transform:scaleX(0.9609);transform-origin:0 0;">14/11/2025</div>
<div class="t" style="left:367.2px;top:13.7px;font-size:27.06px;font-weight:400;color:#111;transform:scaleX(0.9609);transform-origin:0 0;">Cuti Tahunan</div>
<div class="t" style="left:1262.2px;top:13.7px;font-size:27.06px;font-weight:400;color:#111;transform:scaleX(0.9609);transform-origin:0 0;">0.50</div>
<div class="t" style="left:1681.3px;top:13.7px;font-size:27.06px;font-weight:400;color:#111;transform:scaleX(0.9609);transform-origin:0 0;">Half Day</div>
<div class="r" style="left:0px;top:100px;width:1872px;height:2px;background:#d2d2d2;"></div>
<div class="t" style="left:20.7px;top:63.7px;font-size:27.06px;font-weight:400;color:#111;transform:scaleX(0.9609);transform-origin:0 0;">03/10/2025</div>
<div class="t" style="left:194.8px;top:63.7px;font-size:27.06px;font-weight:400;color:#111;transform:scaleX(0.9609);transform-origin:0 0;">03/10/2025</div>
<div class="t" style="left:367.2px;top:63.7px;font-size:27.06px;font-weight:400;color:#111;transform:scaleX(0.9609);transform-origin:0 0;">Cuti Tahunan</div>
<div class="t" style="left:1261.3px;top:63.7px;font-size:27.06px;font-weight:400;color:#111;transform:scaleX(0.9609);transform-origin:0 0;">1.00</div>
<div class="t" style="left:1681.3px;top:63.7px;font-size:27.06px;font-weight:400;color:#111;transform:scaleX(0.9609);transform-origin:0 0;">Full Day</div>
<div class="r" style="left:0px;top:100px;width:1872px;height:50px;background:#f5f5f5;"></div>
<div class="r" style="left:0px;top:150px;width:1872px;height:2px;background:#d2d2d2;"></div>
<div class="t" style="left:20.7px;top:113.7px;font-size:27.06px;font-weight:400;color:#111;transform:scaleX(0.9609);transform-origin:0 0;">06/08/2025</div>
<div class="t" style="left:194.8px;top:113.7px;font-size:27.06px;font-weight:400;color:#111;transform:scaleX(0.9609);transform-origin:0 0;">06/08/2025</div>
<div class="t" style="left:366.3px;top:113.7px;font-size:27.06px;font-weight:400;color:#111;transform:scaleX(0.9609);transform-origin:0 0;">Izin Keluarga Inti Sedang sakit</div>
<div class="t" style="left:1261.3px;top:113.7px;font-size:27.06px;font-weight:400;color:#111;transform:scaleX(0.9609);transform-origin:0 0;">1.00</div>
<div class="r" style="left:0px;top:200px;width:1872px;height:2px;background:#d2d2d2;"></div>
<div class="t" style="left:20.7px;top:163.7px;font-size:27.06px;font-weight:400;color:#111;transform:scaleX(0.9609);transform-origin:0 0;">30/07/2025</div>
<div class="t" style="left:194.8px;top:163.7px;font-size:27.06px;font-weight:400;color:#111;transform:scaleX(0.9609);transform-origin:0 0;">30/07/2025</div>
<div class="t" style="left:367.2px;top:163.7px;font-size:27.06px;font-weight:400;color:#111;transform:scaleX(0.9609);transform-origin:0 0;">Sakit</div>
<div class="t" style="left:1261.3px;top:163.7px;font-size:27.06px;font-weight:400;color:#111;transform:scaleX(0.9609);transform-origin:0 0;">1.00</div>
<div class="r" style="left:0px;top:200px;width:1872px;height:50px;background:#f5f5f5;"></div>
<div class="r" style="left:0px;top:250px;width:1872px;height:2px;background:#d2d2d2;"></div>
<div class="t" style="left:20.7px;top:213.7px;font-size:27.06px;font-weight:400;color:#111;transform:scaleX(0.9609);transform-origin:0 0;">21/07/2025</div>
<div class="t" style="left:194.8px;top:213.7px;font-size:27.06px;font-weight:400;color:#111;transform:scaleX(0.9609);transform-origin:0 0;">21/07/2025</div>
<div class="t" style="left:367.2px;top:213.7px;font-size:27.06px;font-weight:400;color:#111;transform:scaleX(0.9609);transform-origin:0 0;">Cuti Tahunan</div>
<div class="t" style="left:1261.3px;top:213.7px;font-size:27.06px;font-weight:400;color:#111;transform:scaleX(0.9609);transform-origin:0 0;">1.00</div>
<div class="r" style="left:0px;top:300px;width:1872px;height:2px;background:#d2d2d2;"></div>
<div class="t" style="left:19.8px;top:263.7px;font-size:27.06px;font-weight:400;color:#111;transform:scaleX(0.9609);transform-origin:0 0;">18/07/2025</div>
<div class="t" style="left:193.9px;top:263.7px;font-size:27.06px;font-weight:400;color:#111;transform:scaleX(0.9609);transform-origin:0 0;">18/07/2025</div>
<div class="t" style="left:367.2px;top:263.7px;font-size:27.06px;font-weight:400;color:#111;transform:scaleX(0.9609);transform-origin:0 0;">Cuti Tahunan</div>
<div class="t" style="left:1261.3px;top:263.7px;font-size:27.06px;font-weight:400;color:#111;transform:scaleX(0.9609);transform-origin:0 0;">1.00</div>
<div class="r" style="left:0px;top:300px;width:1872px;height:50px;background:#f5f5f5;"></div>
<div class="r" style="left:0px;top:350px;width:1872px;height:2px;background:#d2d2d2;"></div>
<div class="t" style="left:20.7px;top:313.7px;font-size:27.06px;font-weight:400;color:#111;transform:scaleX(0.9609);transform-origin:0 0;">05/06/2025</div>
<div class="t" style="left:194.8px;top:313.7px;font-size:27.06px;font-weight:400;color:#111;transform:scaleX(0.9609);transform-origin:0 0;">05/06/2025</div>
<div class="t" style="left:367.2px;top:313.7px;font-size:27.06px;font-weight:400;color:#111;transform:scaleX(0.9609);transform-origin:0 0;">Sakit</div>
<div class="t" style="left:1261.3px;top:313.7px;font-size:27.06px;font-weight:400;color:#111;transform:scaleX(0.9609);transform-origin:0 0;">1.00</div>
<div class="r" style="left:0px;top:400px;width:1872px;height:2px;background:#d2d2d2;"></div>
<div class="t" style="left:20.7px;top:363.7px;font-size:27.06px;font-weight:400;color:#111;transform:scaleX(0.9609);transform-origin:0 0;">09/05/2025</div>
<div class="t" style="left:194.8px;top:363.7px;font-size:27.06px;font-weight:400;color:#111;transform:scaleX(0.9609);transform-origin:0 0;">09/05/2025</div>
<div class="t" style="left:367.2px;top:363.7px;font-size:27.06px;font-weight:400;color:#111;transform:scaleX(0.9609);transform-origin:0 0;">Sakit</div>
<div class="t" style="left:1261.3px;top:363.7px;font-size:27.06px;font-weight:400;color:#111;transform:scaleX(0.9609);transform-origin:0 0;">1.00</div>
<div class="r" style="left:0px;top:400px;width:1872px;height:50px;background:#f5f5f5;"></div>
<div class="r" style="left:0px;top:450px;width:1872px;height:2px;background:#d2d2d2;"></div>
<div class="t" style="left:20.7px;top:413.7px;font-size:27.06px;font-weight:400;color:#111;transform:scaleX(0.9609);transform-origin:0 0;">28/02/2025</div>
<div class="t" style="left:194.8px;top:413.7px;font-size:27.06px;font-weight:400;color:#111;transform:scaleX(0.9609);transform-origin:0 0;">28/02/2025</div>
<div class="t" style="left:367.2px;top:413.7px;font-size:27.06px;font-weight:400;color:#111;transform:scaleX(0.9609);transform-origin:0 0;">Sakit</div>
<div class="t" style="left:1261.3px;top:413.7px;font-size:27.06px;font-weight:400;color:#111;transform:scaleX(0.9609);transform-origin:0 0;">1.00</div>
<div class="r" style="left:0px;top:500px;width:1872px;height:2px;background:#d2d2d2;"></div>
<div class="t" style="left:20.7px;top:463.7px;font-size:27.06px;font-weight:400;color:#111;transform:scaleX(0.9609);transform-origin:0 0;">21/02/2025</div>
<div class="t" style="left:194.8px;top:463.7px;font-size:27.06px;font-weight:400;color:#111;transform:scaleX(0.9609);transform-origin:0 0;">21/02/2025</div>
<div class="t" style="left:367.2px;top:463.7px;font-size:27.06px;font-weight:400;color:#111;transform:scaleX(0.9609);transform-origin:0 0;">Sakit</div>
<div class="t" style="left:1261.3px;top:463.7px;font-size:27.06px;font-weight:400;color:#111;transform:scaleX(0.9609);transform-origin:0 0;">1.00</div>
</div>
<div class="r" style="left:2726px;top:798px;width:30px;height:476px;background:#fafafa;"></div>
<svg style="left:2729px;top:804px" width="24" height="20" viewBox="0 0 24 20"><path d="M5.5 15.5 L12 6 L18.5 15.5 Z" fill="#8a8a8a" stroke="#8a8a8a" stroke-width="3.2" stroke-linejoin="round"/></svg>
<svg style="left:2729px;top:1248px" width="24" height="20" viewBox="0 0 24 20"><path d="M5.5 4.5 L12 14 L18.5 4.5 Z" fill="#8a8a8a" stroke="#8a8a8a" stroke-width="3.2" stroke-linejoin="round"/></svg>
<div class="r" style="left:2732px;top:834px;width:18px;height:383px;background:#8a8a8a;border-radius:9px;"></div>
<div class="r" style="left:588px;top:1300px;width:2168px;height:2px;background:#d0d0d0;"></div>
<svg style="left:600px;top:1318px" width="640" height="46" viewBox="0 0 640 46" fill="none" stroke-width="2.2" stroke-linejoin="miter">
<path d="M29.2 6 L12.4 21.8 L29.2 37.7 M43.8 6 L26.7 21.8 L43.8 37.7" stroke="#d2d2d2"/>
<path d="M99.4 6 L82.6 21.8 L99.4 37.7" stroke="#d2d2d2"/>
<path d="M132.9 8 V36" stroke="#dcdcdc" stroke-width="1.6"/>
<path d="M461 6 L479.8 22 L461 37.7" stroke="#8e8e8e"/>
<path d="M518.2 6 L535.7 22 L518.2 37.7 M531.4 6 L549.4 22 L531.4 37.7" stroke="#8e8e8e"/>
<path d="M429 8 V36" stroke="#dcdcdc" stroke-width="1.6"/>
<path d="M574.7 8 V36" stroke="#dcdcdc" stroke-width="1.6"/>
<path d="M629.8 28.5 A15.5 15.5 0 1 1 624.7 9.3" stroke="#a2a2a2"/>
<path d="M631 6 V19.5 H618" stroke="#a2a2a2"/>
</svg>
<div class="t" style="left:759.3px;top:1326.7px;font-size:27.06px;font-weight:400;color:#2e3540;transform:scaleX(0.9609);transform-origin:0 0;">Page</div>
<div class="r" style="left:848px;top:1316px;width:100px;height:48px;background:#fff;border:2px solid #4a86cf;box-sizing:border-box;"></div>
<div class="r" style="left:861px;top:1325px;width:15px;height:31px;background:#4a67d6;"></div>
<svg style="left:862px;top:1330px" width="14" height="20" viewBox="0 0 14 20"><path d="M7.2 0.5 H9.6 V19 H7 V4.2 C5.6 5.6 3.9 6.5 2.2 7.1 V4.6 C4.3 3.6 6.2 2.2 7.2 0.5 Z" fill="#fff"/></svg>
<div class="t" style="left:961.4px;top:1326.7px;font-size:27.06px;font-weight:400;color:#2e3540;transform:scaleX(0.9609);transform-origin:0 0;">of 2</div>
<div class="t" style="left:2472.3px;top:1326.9px;font-size:27.06px;font-weight:400;color:#333d47;transform:scaleX(0.9609);transform-origin:0 0;">Displaying 1 - 10 of 12</div>
</body></html>
